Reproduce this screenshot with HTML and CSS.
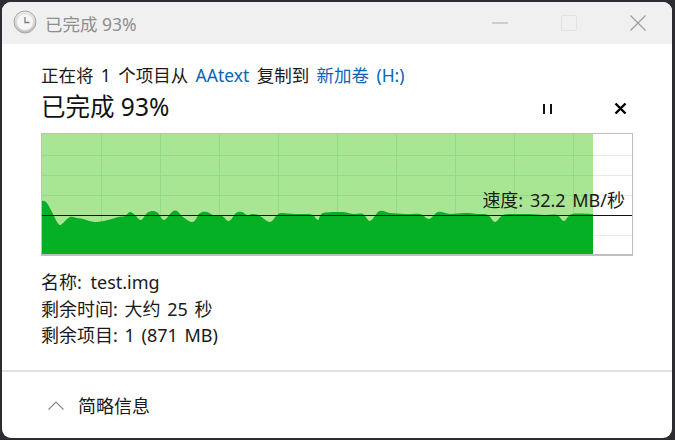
FILE: index.html
```html
<!DOCTYPE html>
<html lang="zh-CN">
<head>
    <meta charset="UTF-8">
    <title>已完成 93%</title>
    <link rel="stylesheet" href="styles.css">
</head>
<body>

<div class="window">
    <div class="titlebar">
        <svg class="clock-icon" width="24" height="24" viewBox="0 0 24 24">
            <defs>
                <linearGradient id="clockRim" x1="0" y1="0" x2="0" y2="1">
                    <stop offset="0" stop-color="#efefef"/>
                    <stop offset="1" stop-color="#bdbdbd"/>
                </linearGradient>
            </defs>
            <circle cx="12" cy="12" r="11" fill="url(#clockRim)" stroke="#a8a8a8"/>
            <circle cx="12" cy="12" r="8.5" fill="#f6f6f6" stroke="#d4d4d4" stroke-width="0.6"/>
            <path d="M12 7V12.5H16.5" fill="none" stroke="#7d7d7d" stroke-width="1.3"/>
        </svg>
        <div class="window-title">已完成 93%</div>
        <div class="window-controls">
            <svg class="control-min" width="16" height="16" viewBox="0 0 16 16"><path d="M0 8H16" stroke="#aaa" stroke-width="1"/></svg>
            <svg class="control-max" width="16" height="16" viewBox="0 0 16 16"><rect x="0.5" y="0.5" width="15" height="15" rx="1" fill="none" stroke="#e2e2e2"/></svg>
            <svg class="control-close" width="16" height="16" viewBox="0 0 16 16"><path d="M0.5 0.5L15.5 15.5M15.5 0.5L0.5 15.5" stroke="#9a9a9a" stroke-width="1.1"/></svg>
        </div>
    </div>

    <div class="content">
        <div class="copy-line">正在将 1 个项目从 <span class="link">AAtext</span> 复制到 <span class="link">新加卷 (H:)</span></div>

        <div class="progress-row">
            <div class="progress-title">已完成 93%</div>
            <svg class="pause-icon" width="12" height="12" viewBox="0 0 12 12"><path d="M2 1V11M9 1V11" stroke="#111" stroke-width="2"/></svg>
            <svg class="stop-icon" width="13" height="13" viewBox="0 0 13 13"><path d="M1.5 1.5L11.5 11.5M11.5 1.5L1.5 11.5" stroke="#000" stroke-width="2.4"/></svg>
        </div>

        <div class="chart">
            <svg class="chart-svg" width="590" height="120" viewBox="42 134 590 120">
                <rect class="chart-done" x="42" y="134" width="551" height="120"/>
                <path class="grid-done" d="M101.5 134V254M160.5 134V254M219.5 134V254M278.5 134V254M337.5 134V254M396.5 134V254M455.5 134V254M514.5 134V254M573.5 134V254M42 155.5H593M42 175.5H593M42 195.5H593M42 235.5H593"/>
                <path class="grid-rest" d="M593 155.5H632M593 175.5H632M593 195.5H632M593 235.5H632"/>
                <path class="chart-area" id="speedArea"/>
                <path class="speed-line" d="M42 215.5H632"/>
            </svg>
            <div class="speed-label">速度: 32.2 MB/秒</div>
        </div>

        <div class="details">
            <div class="name-row">名称: test.img</div>
            <div>剩余时间: 大约 25 秒</div>
            <div>剩余项目: 1 (871 MB)</div>
        </div>
    </div>

    <div class="footer">
        <svg class="chevron" width="16" height="9" viewBox="0 0 16 9"><path d="M0.5 8.5L8 1L15.5 8.5" fill="none" stroke="#8a8a8a" stroke-width="1.2"/></svg>
        <span>简略信息</span>
    </div>
</div>

<script src="chart.js"></script>
</body>
</html>
```

FILE: styles.css
```css
* {
    box-sizing: border-box;
}

body {
    margin: 0;
    width: 675px;
    height: 440px;
    padding: 2px 3px 2px 2px;
    overflow: hidden;
    background-color: #2c2c31;
    font-family: "Noto Sans", "Noto Sans CJK SC", sans-serif;
    color: #1a1a1a;
}

.window {
    height: 100%;
    display: flex;
    flex-direction: column;
    background-color: #fff;
    border-radius: 9px;
    overflow: hidden;
}

.titlebar {
    height: 42px;
    flex-shrink: 0;
    display: flex;
    align-items: center;
    padding: 0 26px 0 11px;
    background-color: #f0f0f0;
}

.clock-icon {
    margin-right: 8px;
    margin-bottom: 2px;
}

.window-title {
    font-size: 17.5px;
    color: #8e8e8e;
}

.window-controls {
    margin-left: auto;
    display: flex;
    align-items: center;
    gap: 53px;
}

.content {
    flex-grow: 1;
    padding: 18px 39px 0 39px;
}

.copy-line {
    font-size: 17.5px;
    line-height: 26px;
    word-spacing: 2.8px;
}

.link {
    color: #0b64b4;
}

.progress-row {
    display: flex;
    align-items: center;
    height: 34px;
}

.progress-title {
    font-size: 24.5px;
    color: #111;
    flex-grow: 1;
}

.pause-icon {
    margin-top: 7px;
    margin-right: 60px;
}

.stop-icon {
    margin-top: 7px;
    margin-right: 6px;
}

.chart {
    position: relative;
    width: 592px;
    height: 123px;
    margin-top: 11px;
    border: 1px solid #bfbfbf;
    border-bottom-width: 2px;
}

.chart-svg {
    display: block;
}

.chart-done {
    fill: #a9e693;
}

.grid-done {
    fill: none;
    stroke: #93d989;
    stroke-width: 1;
}

.grid-rest {
    fill: none;
    stroke: #dff3dc;
    stroke-width: 1;
}

.chart-area {
    fill: #06b025;
}

.speed-line {
    fill: none;
    stroke: #111;
    stroke-width: 1;
}

.speed-label {
    position: absolute;
    right: 7px;
    top: 53px;
    font-size: 18px;
    line-height: 26px;
    word-spacing: 2px;
    white-space: nowrap;
}

.details {
    margin-top: 13px;
    font-size: 18px;
    line-height: 26.5px;
    word-spacing: 2px;
}

.name-row {
    word-spacing: 4px;
}

.footer {
    height: 68px;
    flex-shrink: 0;
    display: flex;
    align-items: center;
    padding: 0 0 0 46px;
    border-top: 2px solid #e2e2e2;
    font-size: 18px;
}

.chevron {
    margin-right: 14px;
}
```

FILE: chart.js
```js
// Speed samples read as x, y inside the chart
const samples = [
    [42, 201], [44, 201], [47, 203], [52, 212], [57, 222], [60, 225], [63, 223], [70, 217],
    [77, 218], [83, 219], [95, 222], [108, 220], [118, 217], [125, 216], [130, 212], [135, 215],
    [141, 220], [147, 213], [153, 211], [158, 213], [164, 220], [172, 212], [177, 211], [183, 217],
    [193, 222], [200, 213], [207, 212], [213, 215], [222, 216], [229, 221], [236, 213], [242, 212],
    [247, 215], [253, 214], [260, 216], [270, 222], [277, 215], [282, 213], [295, 214], [307, 214],
    [313, 215], [318, 220], [323, 213], [342, 212], [353, 214], [363, 214], [370, 221], [378, 212],
    [383, 211], [390, 213], [405, 214], [420, 214], [429, 219], [438, 212], [450, 214], [465, 213],
    [478, 214], [488, 215], [495, 222], [503, 215], [515, 214], [530, 214], [545, 215], [557, 215],
    [564, 221], [572, 214], [593, 214]
];

// Smooth the samples with a Catmull-Rom curve
function buildAreaPath(points, bottom) {
    let d = `M${points[0][0]} ${bottom}L${points[0][0]} ${points[0][1]}`;
    for (let i = 0; i < points.length - 1; i++) {
        const p0 = points[Math.max(i - 1, 0)];
        const p1 = points[i];
        const p2 = points[i + 1];
        const p3 = points[Math.min(i + 2, points.length - 1)];
        const c1x = p1[0] + (p2[0] - p0[0]) / 6;
        const c1y = p1[1] + (p2[1] - p0[1]) / 6;
        const c2x = p2[0] - (p3[0] - p1[0]) / 6;
        const c2y = p2[1] - (p3[1] - p1[1]) / 6;
        d += `C${c1x} ${c1y} ${c2x} ${c2y} ${p2[0]} ${p2[1]}`;
    }
    return d + `L${points[points.length - 1][0]} ${bottom}Z`;
}

document.getElementById("speedArea").setAttribute("d", buildAreaPath(samples, 254));
```
